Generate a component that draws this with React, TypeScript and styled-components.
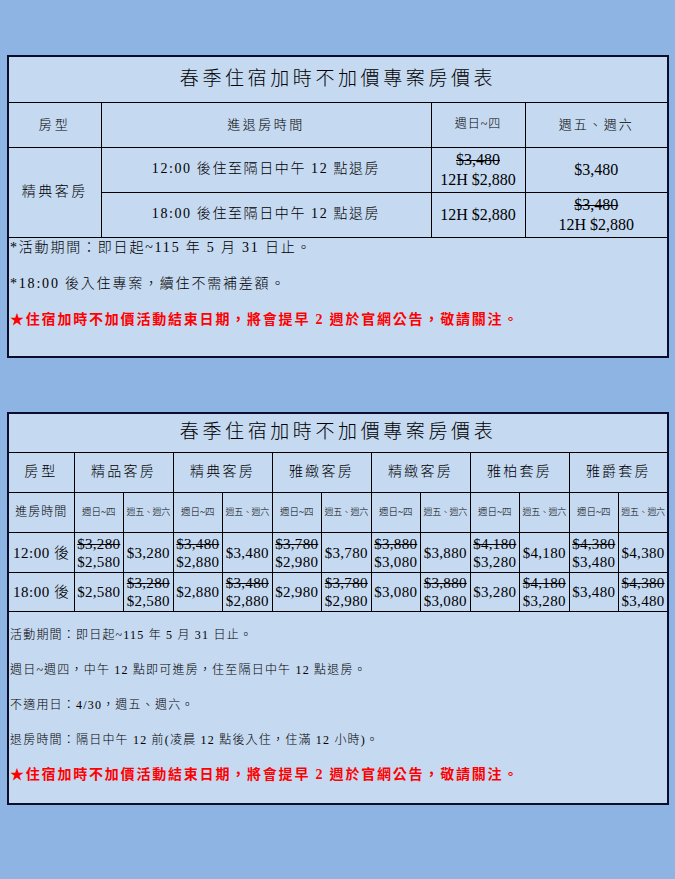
import React, { FC } from "react";
import styled, { createGlobalStyle } from "styled-components";

const FONT = `"Liberation Serif", "Noto Sans CJK TC", serif`;

const GlobalStyle = createGlobalStyle`
  html, body {
    margin: 0;
    padding: 0;
    background: #8db4e2;
  }
  body {
    font-family: ${FONT};
    color: #000;
  }
`;

const Page = styled.div`
  min-height: 879px;
  box-sizing: border-box;
  padding: 55px 0 0 7px;
  display: flex;
  flex-direction: column;
  gap: 54px;
`;

const PriceTable = styled.table`
  width: 660px;
  border-collapse: collapse;
  table-layout: fixed;
  background: #c5d9f1;
  border: 2px solid #0c0c2c;
  font-family: ${FONT};
`;

const Row = styled.tr<{ $h: number }>`
  height: ${(p) => p.$h}px;
`;

const Cell = styled.td<{ $size?: number; $spacing?: number }>`
  border: 1px solid #000;
  padding: 0;
  text-align: center;
  vertical-align: middle;
  font-size: ${(p) => p.$size ?? 14}px;
  letter-spacing: ${(p) => p.$spacing ?? 0}px;
  line-height: 1.2;
  font-weight: 300;
  white-space: nowrap;
  overflow: hidden;
`;

const TitleCell = styled(Cell)`
  font-size: 19px;
  letter-spacing: 3.6px;
`;

const NoteCell = styled.td<{ $pad: string }>`
  border: 1px solid #000;
  padding: ${(p) => p.$pad};
  vertical-align: top;
  text-align: left;
`;

const NoteList = styled.div<{ $gap: number }>`
  display: flex;
  flex-direction: column;
  gap: ${(p) => p.$gap}px;
`;

const NoteLine = styled.p<{ $size: number; $spacing: number; $red?: boolean }>`
  margin: 0;
  line-height: 20px;
  font-size: ${(p) => p.$size}px;
  letter-spacing: ${(p) => p.$spacing}px;
  font-weight: ${(p) => (p.$red ? 700 : 300)};
  color: ${(p) => (p.$red ? "#ff0000" : "#000")};
  white-space: nowrap;
`;

const Old = styled.span`
  display: block;
  text-decoration: line-through;
  text-decoration-thickness: 1px;
`;

const Now = styled.span`
  display: block;
`;

const Price: FC<{ old?: string; now: string }> = ({ old, now }) => (
  <>
    {old && <Old>{old}</Old>}
    <Now>{now}</Now>
  </>
);

type Pair = { old?: string; now: string };
type Room = { name: string; noon: Pair[]; evening: Pair[] };

// 12:00 後 => 週日~四 有折扣；18:00 後 => 週五、週六 有折扣
const rooms: Room[] = [
  { name: "精品客房", base: "3,280", deal: "2,580" },
  { name: "精典客房", base: "3,480", deal: "2,880" },
  { name: "雅緻客房", base: "3,780", deal: "2,980" },
  { name: "精緻客房", base: "3,880", deal: "3,080" },
  { name: "雅柏套房", base: "4,180", deal: "3,280" },
  { name: "雅爵套房", base: "4,380", deal: "3,480" },
].map((r) => ({
  name: r.name,
  noon: [
    { old: `$${r.base}`, now: `$${r.deal}` },
    { now: `$${r.base}` },
  ],
  evening: [
    { now: `$${r.deal}` },
    { old: `$${r.base}`, now: `$${r.deal}` },
  ],
}));

const SpringTable: FC = () => (
  <PriceTable>
    <colgroup>
      <col style={{ width: 93 }} />
      <col style={{ width: 330 }} />
      <col style={{ width: 94 }} />
      <col style={{ width: 143 }} />
    </colgroup>
    <tbody>
      <Row $h={46}>
        <TitleCell colSpan={4}>春季住宿加時不加價專案房價表</TitleCell>
      </Row>
      <Row $h={45}>
        <Cell $size={13} $spacing={3}>房型</Cell>
        <Cell $size={13} $spacing={2.5}>進退房時間</Cell>
        <Cell $size={12} $spacing={1}>週日~四</Cell>
        <Cell $size={13} $spacing={2}>週五、週六</Cell>
      </Row>
      <Row $h={45}>
        <Cell rowSpan={2} $size={14} $spacing={2.5}>精典客房</Cell>
        <Cell $size={14} $spacing={1.6}>12:00 後住至隔日中午 12 點退房</Cell>
        <Cell $size={16}>
          <Price old="$3,480" now="12H $2,880" />
        </Cell>
        <Cell $size={16}>
          <Price now="$3,480" />
        </Cell>
      </Row>
      <Row $h={45}>
        <Cell $size={14} $spacing={1.6}>18:00 後住至隔日中午 12 點退房</Cell>
        <Cell $size={16}>
          <Price now="12H $2,880" />
        </Cell>
        <Cell $size={16}>
          <Price old="$3,480" now="12H $2,880" />
        </Cell>
      </Row>
      <tr>
        <NoteCell colSpan={4} $pad="0 0 26px 1px">
          <NoteList $gap={16}>
            <NoteLine $size={14} $spacing={1.8}>*活動期間：即日起~115 年 5 月 31 日止。</NoteLine>
            <NoteLine $size={14} $spacing={1.8}>*18:00 後入住專案，續住不需補差額。</NoteLine>
            <NoteLine $size={14} $spacing={1.8} $red>
              ★住宿加時不加價活動結束日期，將會提早 2 週於官網公告，敬請關注。
            </NoteLine>
          </NoteList>
        </NoteCell>
      </tr>
    </tbody>
  </PriceTable>
);

const RoomsTable: FC = () => (
  <PriceTable>
    <colgroup>
      <col style={{ width: 66 }} />
      {Array.from({ length: 12 }).map((_, i) => (
        <col key={i} style={{ width: 49.5 }} />
      ))}
    </colgroup>
    <tbody>
      <Row $h={40}>
        <TitleCell colSpan={13}>春季住宿加時不加價專案房價表</TitleCell>
      </Row>
      <Row $h={40}>
        <Cell $size={14} $spacing={3}>房型</Cell>
        {rooms.map((r) => (
          <Cell key={r.name} colSpan={2} $size={14} $spacing={2.2}>
            {r.name}
          </Cell>
        ))}
      </Row>
      <Row $h={40}>
        <Cell $size={12} $spacing={1}>進房時間</Cell>
        {rooms.map((r) => (
          <React.Fragment key={r.name}>
            <Cell $size={9.5}>週日~四</Cell>
            <Cell $size={9} $spacing={-0.3}>週五、週六</Cell>
          </React.Fragment>
        ))}
      </Row>
      <Row $h={40}>
        <Cell $size={15} $spacing={0.5}>12:00 後</Cell>
        {rooms.map((r) =>
          r.noon.map((p, i) => (
            <Cell key={`${r.name}-n${i}`} $size={15} $spacing={0.3}>
              <Price old={p.old} now={p.now} />
            </Cell>
          ))
        )}
      </Row>
      <Row $h={39}>
        <Cell $size={15} $spacing={0.5}>18:00 後</Cell>
        {rooms.map((r) =>
          r.evening.map((p, i) => (
            <Cell key={`${r.name}-e${i}`} $size={15} $spacing={0.3}>
              <Price old={p.old} now={p.now} />
            </Cell>
          ))
        )}
      </Row>
      <tr>
        <NoteCell colSpan={13} $pad="13px 0 18px 1px">
          <NoteList $gap={15}>
            <NoteLine $size={12} $spacing={1.2}>活動期間：即日起~115 年 5 月 31 日止。</NoteLine>
            <NoteLine $size={12} $spacing={1.2}>週日~週四，中午 12 點即可進房，住至隔日中午 12 點退房。</NoteLine>
            <NoteLine $size={12} $spacing={1.2}>不適用日：4/30，週五、週六。</NoteLine>
            <NoteLine $size={12} $spacing={1.2}>退房時間：隔日中午 12 前(凌晨 12 點後入住，住滿 12 小時)。</NoteLine>
            <NoteLine $size={14} $spacing={1.8} $red>
              ★住宿加時不加價活動結束日期，將會提早 2 週於官網公告，敬請關注。
            </NoteLine>
          </NoteList>
        </NoteCell>
      </tr>
    </tbody>
  </PriceTable>
);

const App: FC = () => (
  <>
    <GlobalStyle />
    <Page>
      <SpringTable />
      <RoomsTable />
    </Page>
  </>
);

export default App;
